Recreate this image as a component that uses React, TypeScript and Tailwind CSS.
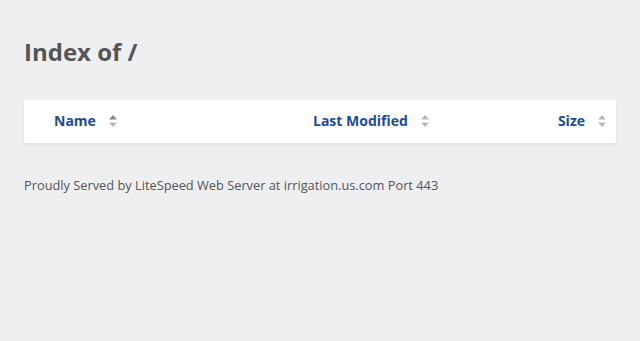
const SortArrows = ({ active = false }: { active?: boolean }) => (
  <svg width="8" height="12" viewBox="0 0 8 12" className="ml-[13px] shrink-0">
    <path d="M4 0 L8 4.5 L0 4.5 Z" fill={active ? '#888888' : '#b8b8b8'} />
    <path d="M4 12 L8 7.5 L0 7.5 Z" fill="#b8b8b8" />
  </svg>
);

export default function App() {
  return (
    <div
      className="min-h-[341px] w-full bg-[#eeeff1] px-6 pt-[36px] text-[#555555]"
      style={{ fontFamily: '"Open Sans", "Liberation Sans", sans-serif' }}
    >
      <h1 className="text-[24px] font-bold leading-[32px]">Index of /</h1>

      <div className="mt-[32px] bg-white shadow-[0_2px_3px_rgba(0,0,0,0.06)]">
        <div className="flex h-[43px] items-center pb-[2px] pl-[30px] pr-[10px] text-[14px] font-bold text-[#1b4c9b]">
          <div className="flex w-[259px] items-center">
            <span>Name</span>
            <SortArrows active />
          </div>
          <div className="flex items-center">
            <span>Last Modified</span>
            <SortArrows />
          </div>
          <div className="ml-auto flex items-center">
            <span>Size</span>
            <SortArrows />
          </div>
        </div>
      </div>

      <p className="mt-[33px] text-[12.8px] leading-[18px] text-[#555555]">
        Proudly Served by LiteSpeed Web Server at irrigation.us.com Port 443
      </p>
    </div>
  );
}
